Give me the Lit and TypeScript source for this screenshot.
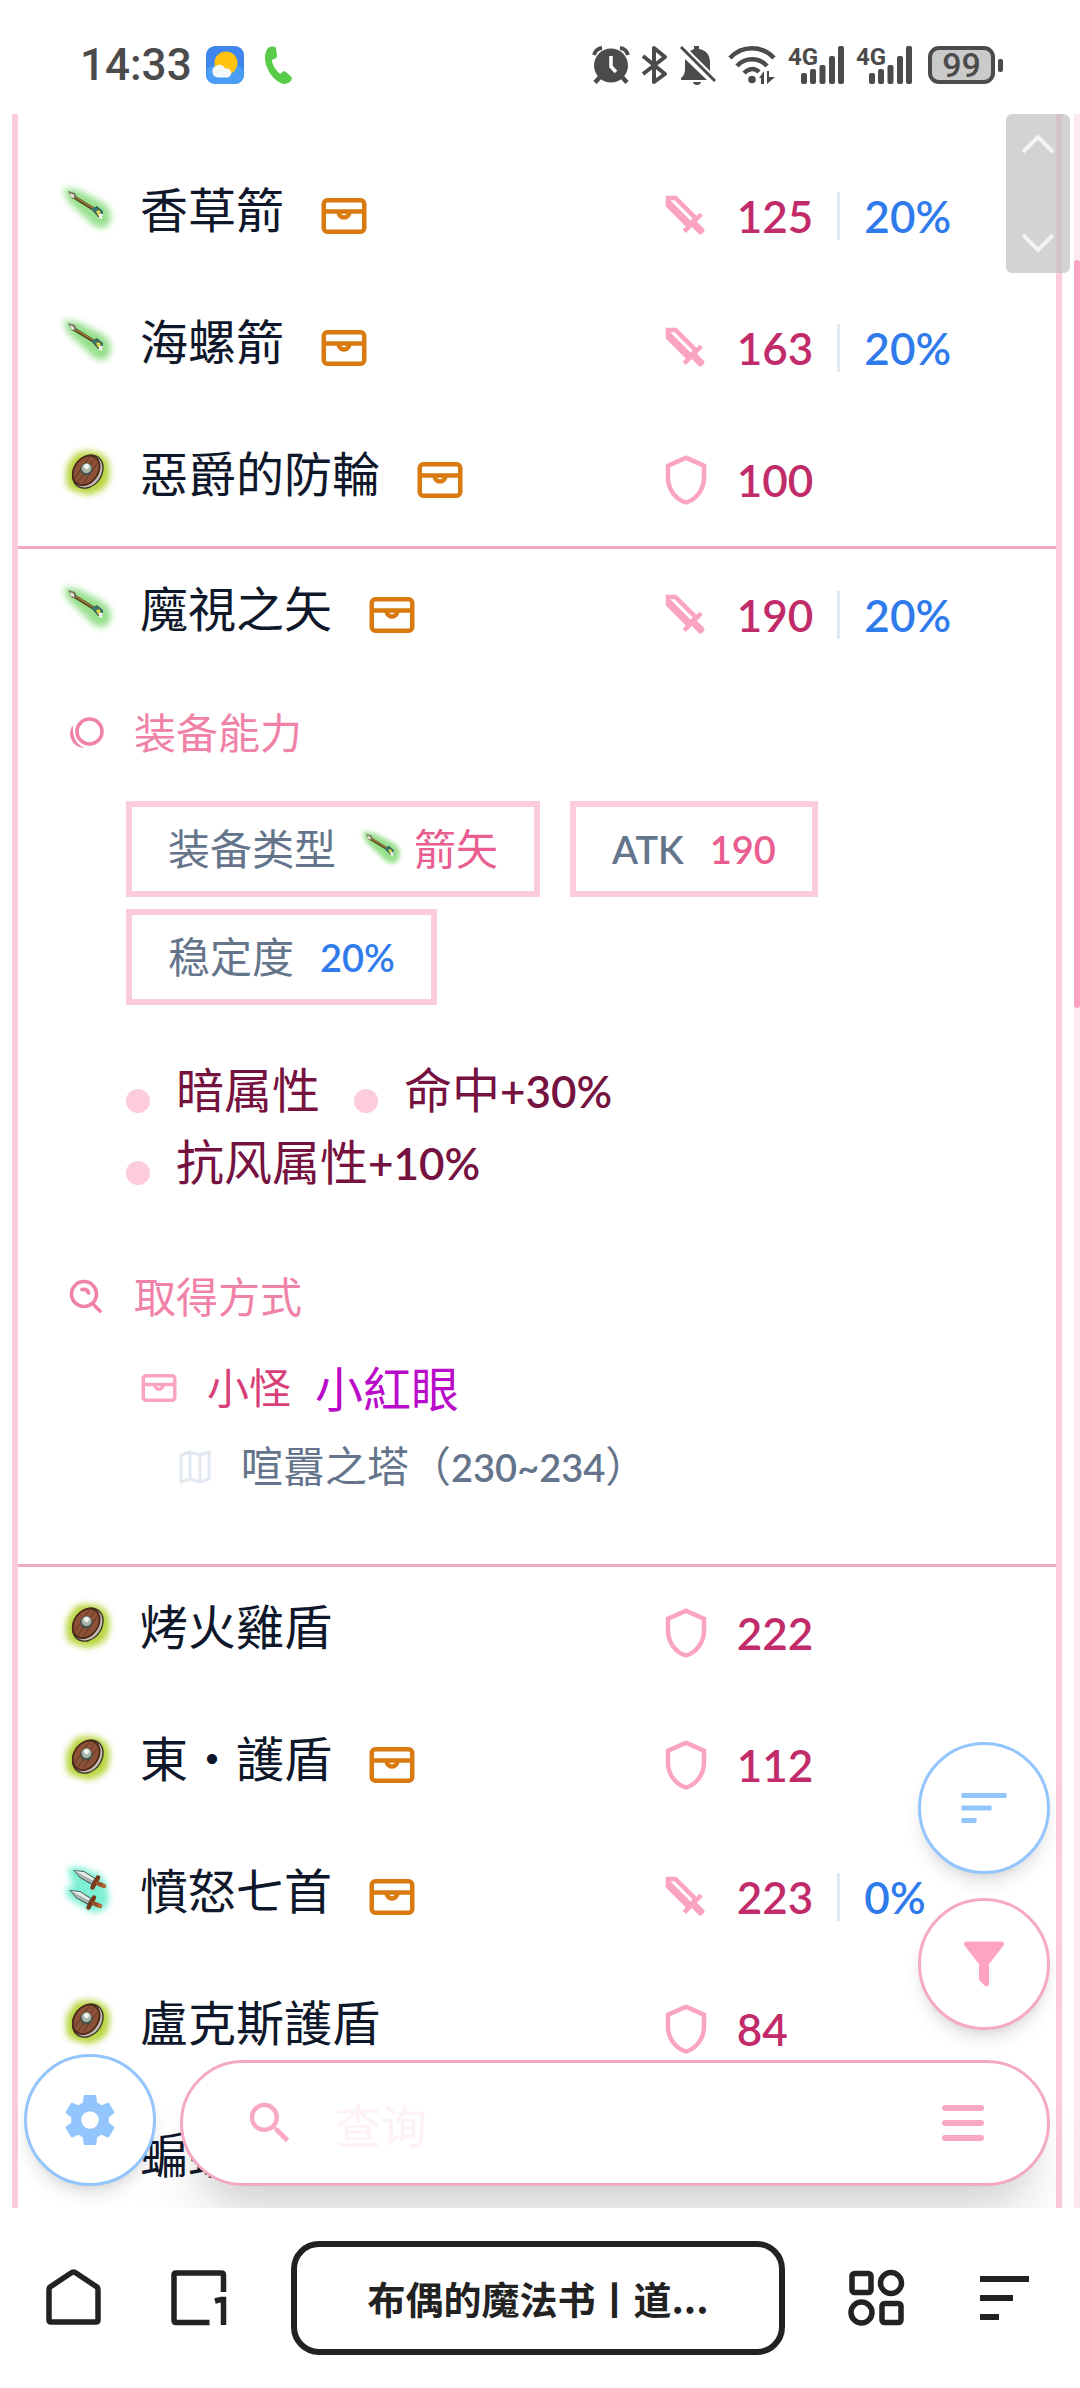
import { LitElement, html, css, svg, nothing } from "lit";
import { customElement, property } from "lit/decorators.js";

type Kind = "arrow" | "shield" | "dagger";

interface Item {
  kind: Kind;
  name: string;
  drop: boolean;
  value: number;
  stability?: number;
  detail?: boolean;
}

const ITEMS: Item[] = [
  { kind: "arrow", name: "香草箭", drop: true, value: 125, stability: 20 },
  { kind: "arrow", name: "海螺箭", drop: true, value: 163, stability: 20 },
  { kind: "shield", name: "惡爵的防輪", drop: true, value: 100 },
  { kind: "arrow", name: "魔視之矢", drop: true, value: 190, stability: 20, detail: true },
  { kind: "shield", name: "烤火雞盾", drop: false, value: 222 },
  { kind: "shield", name: "東・護盾", drop: true, value: 112 },
  { kind: "dagger", name: "憤怒七首", drop: true, value: 223, stability: 0 },
  { kind: "shield", name: "盧克斯護盾", drop: false, value: 84 },
  { kind: "shield", name: "蝙蝠", drop: false, value: 96 },
];

const PATHS = {
  sword:
    "M6.92,5H5L14,14L15,13.06M19.96,19.12L19.12,19.96C18.73,20.35 18.1,20.35 17.71,19.96L14.59,16.84L11.91,19.5L10.5,18.09L11.92,16.67L3,7.75V3H7.75L16.67,11.92L18.09,10.5L19.5,11.91L16.83,14.58L19.95,17.7C20.35,18.1 20.35,18.73 19.96,19.12Z",
  guard:
    "M21,11C21,16.55 17.16,21.74 12,23C6.84,21.74 3,16.55 3,11V5L12,1L21,5V11M12,21C15.75,20 19,15.54 19,11.22V6.3L12,3.18L5,6.3V11.22C5,15.54 8.25,20 12,21Z",
  sort: "M3,13H15V11H3M3,6V8H21V6M3,18H9V16H3V18Z",
  filter:
    "M14,12V19.88C14.04,20.18 13.94,20.5 13.71,20.71C13.32,21.1 12.69,21.1 12.3,20.71L10.29,18.7C10.06,18.47 9.96,18.16 10,17.87V12H9.97L4.21,4.62C3.87,4.19 3.95,3.56 4.38,3.22C4.57,3.08 4.78,3 5,3V3H19V3C19.22,3 19.43,3.08 19.62,3.22C20.05,3.56 20.13,4.19 19.79,4.62L14.03,12H14Z",
  cog: "M12,15.5A3.5,3.5 0 0,1 8.5,12A3.5,3.5 0 0,1 12,8.5A3.5,3.5 0 0,1 15.5,12A3.5,3.5 0 0,1 12,15.5M19.43,12.97C19.47,12.65 19.5,12.33 19.5,12C19.5,11.67 19.47,11.34 19.43,11L21.54,9.37C21.73,9.22 21.78,8.95 21.66,8.73L19.66,5.27C19.54,5.05 19.27,4.96 19.05,5.05L16.56,6.05C16.04,5.66 15.5,5.32 14.87,5.07L14.5,2.42C14.46,2.18 14.25,2 14,2H10C9.75,2 9.54,2.18 9.5,2.42L9.13,5.07C8.5,5.32 7.96,5.66 7.44,6.05L4.95,5.05C4.73,4.96 4.46,5.05 4.34,5.27L2.34,8.73C2.21,8.95 2.27,9.22 2.46,9.37L4.57,11C4.53,11.34 4.5,11.67 4.5,12C4.5,12.33 4.53,12.65 4.57,12.97L2.46,14.63C2.27,14.78 2.21,15.05 2.34,15.27L4.34,18.73C4.46,18.95 4.73,19.03 4.95,18.95L7.44,17.94C7.96,18.34 8.5,18.68 9.13,18.93L9.5,21.58C9.54,21.82 9.75,22 10,22H14C14.25,22 14.46,21.82 14.5,21.58L14.87,18.93C15.5,18.67 16.04,18.34 16.56,17.94L19.05,18.95C19.27,19.03 19.54,18.95 19.66,18.73L21.66,15.27C21.78,15.05 21.73,14.78 21.54,14.63L19.43,12.97Z",
  magnify:
    "M9.5,3A6.5,6.5 0 0,1 16,9.5C16,11.11 15.41,12.59 14.44,13.73L14.71,14H15.5L20.5,19L19,20.5L14,15.5V14.71L13.73,14.44C12.59,15.41 11.11,16 9.5,16A6.5,6.5 0 0,1 3,9.5A6.5,6.5 0 0,1 9.5,3M9.5,5C7,5 5,7 5,9.5C5,12 7,14 9.5,14C12,14 14,12 14,9.5C14,7 12,5 9.5,5Z",
};

const glyph = (name: keyof typeof PATHS, cls: string) => html`
  <svg class=${cls} viewBox="0 0 24 24" aria-hidden="true"><path fill="currentColor" d=${PATHS[name]} /></svg>
`;

const chest = (cls: string) => html`
  <svg class=${cls} viewBox="0 0 24 24" fill="none" stroke="currentColor" stroke-width="2" aria-hidden="true">
    <rect x="3" y="5" width="18" height="14" rx="1.6" />
    <path d="M3 10H21M9.6 10a2.4 2.7 0 0 0 4.8 0" />
  </svg>
`;

@customElement("item-icon")
export class ItemIcon extends LitElement {
  @property() kind: Kind = "arrow";

  static styles = css`
    :host {
      display: block;
      flex: none;
      width: 48px;
      height: 48px;
    }
    :host([small]) {
      width: 38px;
      height: 38px;
    }
    svg {
      display: block;
      width: 100%;
      height: 100%;
      overflow: visible;
    }
    .glow {
      filter: blur(3px);
    }
  `;

  private arrow() {
    return svg`
      <path class="glow" fill="#98e08e" d="M1 2 Q7 3 15 4 L35 14 Q48 20 48 30 Q47 41 40 42 Q32 43 25 34 L10 20 Q2 14 1 2Z" />
      <path stroke="#5a4a24" stroke-width="3.6" stroke-linecap="round" d="M11 11 L32 24" />
      <path stroke="#a4803a" stroke-width="1.4" stroke-linecap="round" d="M12 11 L33 24" />
      <path fill="#77735f" d="M5 5 L12 7 L14 12 L9 13Z" />
      <path fill="#e8e6da" d="M7 7 L11 9 L11 12 L8 11Z" />
      <path fill="#37776a" d="M28 23 L34 20 L40 25 L40 31 L35 31Z" />
      <path fill="#d8cf4e" d="M33 25 L37 24 L38 29 L35 30Z" />
      <path fill="#f6f4ee" d="M36 28 L40 28 L39 33 L36 32Z" />
      <path stroke="#4c4632" stroke-width="0.8" fill="none" d="M31 25 L36 31 M33 21 L39 26" />
    `;
  }

  private shield() {
    return svg`
      <path class="glow" fill="#b8d53e" d="M13 3 L24 1 L37 3 L45 10 L47 23 L44 35 L37 41 L25 45 L14 42 L5 38 L3 28 L4 16Z" />
      <g transform="rotate(35 24 21)">
        <ellipse cx="25" cy="21" rx="14.500" ry="18.500" fill="#3c3527" />
        <ellipse cx="25" cy="21" rx="13.200" ry="17" fill="#c6beb4" />
        <ellipse cx="23" cy="21" rx="12.800" ry="17" fill="#4e2a1b" />
        <ellipse cx="23" cy="21" rx="11" ry="15" fill="#8c5136" />
        <path stroke="#6b3b26" stroke-width="1" d="M18 9V33M23 7V36M28 9V33" />
        <circle cx="22.500" cy="20" r="6.200" fill="#47534a" />
        <circle cx="22" cy="19" r="4.900" fill="#a9b7aa" />
        <circle cx="21" cy="17.500" r="2.600" fill="#eff4ee" />
      </g>
    `;
  }

  private dagger() {
    const weapon = svg`
      <path fill="#4d5a57" d="M0 0 L11 1 L22 8 L19 15 L7 8Z" />
      <path fill="#e6ecea" d="M1.500 1 L11 2 L21 8.500 L20 11Z" />
      <path fill="#a9b5b2" d="M1.500 1 L20 11 L18.500 13.500 L7.500 7.200Z" />
      <path stroke="#7a3a1a" stroke-width="4.500" stroke-linecap="round" d="M25 7.500 L19.500 17.500" />
      <path stroke="#9a5128" stroke-width="4.500" stroke-linecap="round" d="M25 13.500 L31 16" />
      <circle cx="31" cy="16" r="2" fill="#b9683d" />
    `;
    return svg`
      <path class="glow" fill="#7df0d4" d="M6 0 L20 1 L38 8 L44 18 L46 34 L41 43 L30 46 L20 40 L4 30 L3 21 L11 18 L6 8Z" />
      <g transform="translate(10 3)">${weapon}</g>
      <g transform="translate(6 23)">${weapon}</g>
    `;
  }

  render() {
    const body = this.kind === "arrow" ? this.arrow() : this.kind === "shield" ? this.shield() : this.dagger();
    return html`<svg viewBox="0 0 48 48" fill="none" aria-hidden="true">${body}</svg>`;
  }
}

@customElement("status-bar")
export class StatusBar extends LitElement {
  static styles = css`
    :host {
      display: flex;
      flex: none;
      align-items: center;
      justify-content: space-between;
      height: 114px;
      padding: 18px 77px 2px 80px;
      box-sizing: border-box;
      background: #fff;
      color: #4b4b4b;
      font-family: Roboto, sans-serif;
    }
    .group {
      display: flex;
      align-items: center;
    }
    .left {
      gap: 14px;
    }
    .right {
      gap: 12px;
    }
    .time {
      font-size: 44px;
      line-height: 48px;
      font-weight: 500;
    }
    svg {
      display: block;
      flex: none;
      overflow: visible;
    }
    .call {
      margin-left: 6px;
    }
    .network {
      font: 700 24px Roboto, sans-serif;
    }
    .battery {
      display: flex;
      align-items: center;
      gap: 3px;
      margin-left: 4px;
    }
    .level {
      width: 67px;
      height: 38px;
      box-sizing: border-box;
      border: 4px solid #4b4b4b;
      border-radius: 11px;
      background: #cacaca;
      font-size: 34px;
      line-height: 30px;
      font-weight: 500;
      text-align: center;
    }
    .nub {
      width: 5px;
      height: 13px;
      border-radius: 2px;
      background: #4b4b4b;
    }
  `;

  private cell() {
    return html`
      <svg width="56" height="38" viewBox="0 0 56 38" fill="currentColor" aria-hidden="true">
        <text class="network" x="0" y="19">4G</text>
        <rect x="13" y="27" width="6" height="11" rx="2" />
        <rect x="22" y="23" width="6" height="15" rx="2" />
        <rect x="31.500" y="19" width="6" height="19" rx="2" />
        <rect x="41" y="10" width="6" height="28" rx="2" />
        <rect x="50" y="0" width="6" height="38" rx="2" />
      </svg>
    `;
  }

  render() {
    return html`
      <div class="group left">
        <span class="time">14:33</span>
        <svg width="38" height="38" viewBox="0 0 38 38" aria-hidden="true">
          <rect width="38" height="38" rx="9" fill="#3f85ee" />
          <rect y="19" width="38" height="19" rx="9" fill="#4a9df5" />
          <circle cx="20" cy="17" r="11.500" fill="#ffc20e" />
          <path fill="#f3f8fb" d="M12 31.500a6 6 0 0 1-2-11.500 6 6 0 0 1 9 2.500 4.600 4.600 0 0 1 3 9Z" />
        </svg>
        <svg class="call" width="28" height="38" viewBox="0 0 28 38" aria-hidden="true">
          <path fill="#58cb48" d="M4 2C7 0 11 0 12 2L13 10C13 12 10 13 8 14C8 19 12 24 16 28L20 25C21 25 27 30 28 32C28 35 24 38 20 38C8 36-5 14 4 2Z" />
        </svg>
      </div>
      <div class="group right">
        <svg width="38" height="38" viewBox="0 0 38 38" aria-hidden="true">
          <circle cx="19" cy="19.500" r="17" fill="currentColor" />
          <path d="M2 9A9 9 0 0 1 10 2M36 9A9 9 0 0 0 28 2" stroke="currentColor" stroke-width="4" fill="none" />
          <path d="M8 31 3 36.500M30 31l5 5.500" stroke="currentColor" stroke-width="4.500" />
          <path d="M19 10V20.500L24 26" stroke="#fff" stroke-width="3.500" fill="none" />
        </svg>
        <svg width="26" height="38" viewBox="0 0 26 38" fill="none" stroke="currentColor" stroke-width="4" stroke-linejoin="round" aria-hidden="true">
          <path d="M1 10 23 28 12 36V2L23 11 1 28" />
        </svg>
        <svg width="36" height="40" viewBox="0 0 36 40" fill="currentColor" aria-hidden="true">
          <path d="M1 35V33C4 31 5 27 5 24V16L5 14 27 35ZM10 6 14 4V1H19V4C26 5 30 10 30 17V26ZM13 37H21C21 41 13 41 13 37Z" />
          <path d="M1 2 35 36" stroke="currentColor" stroke-width="3" />
        </svg>
        <svg width="48" height="38" viewBox="0 0 48 38" fill="none" stroke="currentColor" stroke-width="4.500" aria-hidden="true">
          <path d="M2 12C14-1 34-1 46 12M9 20C17 11 31 11 39 20M16 27C21 22 27 22 31 26" />
          <circle cx="24" cy="33.500" r="3.800" fill="currentColor" stroke="none" />
          <path fill="currentColor" stroke="none" d="M31 32 36 25V38H33V32ZM39 25H41V31H47L39 38Z" />
        </svg>
        ${this.cell()} ${this.cell()}
        <div class="battery">
          <div class="level">99</div>
          <div class="nub"></div>
        </div>
      </div>
    `;
  }
}

@customElement("browser-bar")
export class BrowserBar extends LitElement {
  static styles = css`
    :host {
      display: flex;
      flex: none;
      align-items: center;
      height: 180px;
      padding: 0 47px 0 44px;
      box-sizing: border-box;
      background: #fff;
      color: #222;
    }
    button {
      flex: none;
      padding: 0;
      border: 0;
      background: none;
      color: inherit;
    }
    svg {
      display: block;
    }
    .icon {
      width: 60px;
      height: 60px;
    }
    .tabs {
      margin-left: 65px;
    }
    .address {
      flex: 1;
      min-width: 0;
      height: 114px;
      margin: 0 62px;
      border: 6px solid #222;
      border-radius: 28px;
      font: 700 38px/48px "Noto Sans CJK SC", sans-serif;
      text-align: center;
      white-space: nowrap;
      overflow: hidden;
    }
    .more {
      margin-left: 72px;
      width: 54px;
    }
  `;

  render() {
    return html`
      <button class="icon" aria-label="主页">
        <svg width="60" height="60" viewBox="0 0 60 60" fill="none" stroke="currentColor" stroke-width="5.500" stroke-linejoin="round">
          <path d="M5 22Q5 20 6 19L27 5Q29.500 3 32 5L53 19Q54 20 54 22V52Q54 54 52 54H7Q5 54 5 52Z" />
        </svg>
      </button>
      <button class="icon tabs" aria-label="标签页 1">
        <svg width="60" height="60" viewBox="0 0 60 60" fill="none" stroke="currentColor" stroke-width="5.500">
          <path d="M54.500 24V7Q54.500 5 52.500 5H7Q5 5 5 7V52Q5 54.500 7 54.500H40.500M46 33L52 31.500H54.500V57" />
        </svg>
      </button>
      <button class="address">布偶的魔法书丨道...</button>
      <button class="icon" aria-label="应用">
        <svg width="60" height="60" viewBox="0 0 60 60" fill="none" stroke="currentColor" stroke-width="5.500">
          <rect x="5" y="5.500" width="19" height="19" rx="2.500" />
          <circle cx="44" cy="15" r="10.500" />
          <circle cx="14.500" cy="44.500" r="10.500" />
          <rect x="35" y="35.500" width="19" height="19" rx="2.500" />
        </svg>
      </button>
      <button class="more" aria-label="菜单">
        <svg width="54" height="44" viewBox="0 0 54 44" fill="currentColor">
          <path d="M1 0H50V6H1ZM1 19H34V25H1ZM1 38H20V44H1Z" />
        </svg>
      </button>
    `;
  }
}

@customElement("app-root")
export class AppRoot extends LitElement {
  static styles = css`
    :host {
      display: flex;
      flex-direction: column;
      height: 100vh;
      background: #fff;
      font-family: "Noto Sans CJK TC", "Noto Sans CJK SC", sans-serif;
      color: #0f172a;
      --rose: #f9a8c4;
      --rose-pale: #fccbdc;
      --slate: #64748b;
      --blue: #2f7bec;
    }
    .stage {
      position: relative;
      flex: 1;
      min-height: 0;
      overflow: hidden;
      background: #fff;
    }
    .list {
      margin: 0 18px 0 12px;
      padding: 36px 0 0;
      border: solid var(--rose-pale);
      border-width: 0 6px;
      list-style: none;
    }
    .row {
      display: grid;
      grid-template-columns: minmax(0, 3fr) minmax(0, 2fr);
      height: 132px;
      padding-left: 45px;
    }
    .open {
      border: solid #f0a9c5;
      border-width: 3px 0;
    }
    .title,
    .stat {
      display: flex;
      align-items: center;
      white-space: nowrap;
    }
    .title item-icon {
      margin: 0 29px 12px 0;
    }
    .name {
      margin-bottom: 18px;
      font-size: 48px;
      line-height: 60px;
    }
    .drop {
      flex: none;
      width: 54px;
      height: 54px;
      margin-left: 33px;
      color: #d97a10;
    }
    .stat,
    .latin {
      font-family: Lato, sans-serif;
      font-weight: 600;
    }
    .stat {
      font-size: 44px;
      line-height: 48px;
      color: #c22b69;
    }
    .stat-icon {
      flex: none;
      width: 54px;
      height: 54px;
      margin-right: 24px;
      color: #fba4c2;
    }
    .stability {
      margin-left: 24px;
      padding-left: 24px;
      border-left: 3px solid #e2e8f0;
      color: var(--blue);
    }
    .detail {
      padding: 20px 0 69px;
      font-size: 42px;
      line-height: 60px;
    }
    .heading {
      display: flex;
      align-items: center;
      gap: 29px;
      margin: 0;
      padding-left: 51px;
      font-size: inherit;
      font-weight: 400;
      color: #f082a8;
    }
    .heading svg {
      width: 36px;
      height: 36px;
    }
    .chips {
      display: flex;
      flex-wrap: wrap;
      gap: 12px 30px;
      margin-top: 40px;
      padding: 0 200px 0 108px;
      color: var(--slate);
    }
    .chip {
      display: flex;
      align-items: center;
      height: 96px;
      padding: 0 36px;
      box-sizing: border-box;
      border: 6px solid var(--rose-pale);
      line-height: 60px;
    }
    .chip .cjk {
      margin-bottom: 4px;
    }
    .chip item-icon {
      margin: 0 14px 0 26px;
    }
    .latin {
      font-size: 38px;
    }
    .chip .figure {
      margin-left: 26px;
    }
    .pink {
      color: #e95d90;
    }
    .blue {
      color: var(--blue);
    }
    .effects {
      display: flex;
      flex-wrap: wrap;
      gap: 0 34px;
      margin: 46px 0 0;
      padding: 0 260px 0 108px;
      list-style: none;
      font-size: 48px;
      line-height: 72px;
      color: #75123f;
    }
    .effect {
      display: flex;
      align-items: center;
      gap: 26px;
      height: 72px;
    }
    .effect .latin {
      font-size: 44px;
      line-height: 48px;
    }
    .dot {
      width: 24px;
      height: 24px;
      margin-top: 28px;
      border-radius: 50%;
      background: var(--rose-pale);
    }
    .obtain {
      margin-top: 70px;
    }
    .source,
    .place {
      display: flex;
      align-items: center;
      height: 60px;
    }
    .source {
      margin-top: 31px;
      padding-left: 120px;
      color: #d83f78;
    }
    .source svg {
      width: 42px;
      height: 42px;
      margin: 4px 27px 0 0;
      color: #fba4c2;
    }
    .monster {
      margin-left: 24px;
      font-size: 48px;
      color: #b90bc9;
      text-decoration: none;
    }
    .place {
      margin-top: 19px;
      padding-left: 159px;
      color: var(--slate);
    }
    .place svg {
      width: 36px;
      height: 36px;
      margin: 4px 28px 0 0;
      color: #e2e8f0;
    }
    .track {
      position: absolute;
      top: 0;
      right: 0;
      bottom: 0;
      width: 6px;
      background: #fee8f0;
    }
    .thumb {
      height: 748px;
      margin-top: 146px;
      border-radius: 3px;
      background: #fda1c0;
    }
    .jump {
      position: absolute;
      top: 0;
      right: 10px;
      display: flex;
      flex-direction: column;
      justify-content: space-between;
      height: 159px;
      width: 64px;
      padding: 18px 0;
      box-sizing: border-box;
      border-radius: 6px;
      background: rgba(192, 192, 192, 0.7);
    }
    button {
      display: flex;
      align-items: center;
      justify-content: center;
      padding: 0;
      border: 0;
      background: none;
      color: inherit;
    }
    .fabs {
      position: absolute;
      right: 30px;
      bottom: 178px;
      display: flex;
      flex-direction: column;
      gap: 24px;
    }
    .fab {
      flex: none;
      width: 132px;
      height: 132px;
      border: 3px solid #93c5fd;
      border-radius: 50%;
      background: #fff;
      color: #93c5fd;
      box-shadow: 0 12px 18px -3px rgba(0, 0, 0, 0.1), 0 6px 12px -6px rgba(0, 0, 0, 0.1);
    }
    .fab.rose {
      border-color: #f5a9c3;
      color: #fea3c1;
    }
    .fab-icon {
      width: 60px;
      height: 60px;
    }
    .dock {
      position: absolute;
      left: 24px;
      right: 30px;
      bottom: 22px;
      display: flex;
      align-items: flex-end;
      gap: 24px;
    }
    .search {
      display: flex;
      flex: 1;
      align-items: center;
      min-width: 0;
      height: 126px;
      padding: 0 63px 0 60px;
      box-sizing: border-box;
      border: 3px solid #f3a9c3;
      border-radius: 63px;
      background: #fff;
      color: var(--rose);
      box-shadow: 0 60px 75px -15px rgba(0, 0, 0, 0.1), 0 24px 30px -12px rgba(0, 0, 0, 0.1);
    }
    .search-icon {
      flex: none;
      width: 54px;
      height: 54px;
    }
    input {
      flex: 1;
      min-width: 0;
      margin: 0 38px;
      padding: 0;
      border: 0;
      outline: 0;
      background: none;
      font: 400 46px/60px "Noto Sans CJK SC", sans-serif;
      color: #be185d;
    }
    input::placeholder {
      color: #fef2f6;
      opacity: 1;
    }
  `;

  private row(item: Item) {
    return html`
      <div class="row">
        <div class="title">
          <item-icon .kind=${item.kind}></item-icon>
          <span class="name">${item.name}</span>
          ${item.drop ? chest("drop") : nothing}
        </div>
        <div class="stat">
          ${glyph(item.kind === "shield" ? "guard" : "sword", "stat-icon")}
          <span>${item.value}</span>
          ${item.stability === undefined ? nothing : html`<span class="stability">${item.stability}%</span>`}
        </div>
      </div>
    `;
  }

  private detail() {
    return html`
      <div class="detail">
        <h3 class="heading">
          <svg viewBox="1 -3 36 36" fill="none" stroke="currentColor" aria-hidden="true">
            <circle cx="21.500" cy="15.500" r="12.500" stroke-width="3.600" />
            <path fill="currentColor" stroke="none" d="M5 9C-2 18 4 32 17 32C9 29 4 22 5 9Z" />
          </svg>
          装备能力
        </h3>
        <div class="chips">
          <div class="chip">
            <span class="cjk">装备类型</span>
            <item-icon small .kind=${"arrow" as Kind}></item-icon>
            <span class="cjk pink">箭矢</span>
          </div>
          <div class="chip latin"><span>ATK</span><span class="figure pink">190</span></div>
          <div class="chip">
            <span class="cjk">稳定度</span><span class="latin figure blue">20%</span>
          </div>
        </div>
        <ul class="effects">
          <li class="effect"><span class="dot"></span><span>暗属性</span></li>
          <li class="effect"><span class="dot"></span><span>命中<span class="latin">+30%</span></span></li>
          <li class="effect"><span class="dot"></span><span>抗风属性<span class="latin">+10%</span></span></li>
        </ul>
        <h3 class="heading obtain">
          <svg viewBox="0 -2 36 36" fill="none" stroke="currentColor" stroke-width="3.600" aria-hidden="true">
            <circle cx="15" cy="15" r="12.500" />
            <path stroke-linecap="round" d="M24 25L31 32M13 10.500Q18.500 9.500 19.500 14" />
          </svg>
          取得方式
        </h3>
        <div class="source">${chest("")}<span>小怪</span><a class="monster" href="#monster">小紅眼</a></div>
        <div class="place">
          <svg viewBox="0 0 36 36" fill="none" stroke="currentColor" stroke-width="3" stroke-linejoin="round" aria-hidden="true">
            <path d="M4 6L13 3L23 6L32 3V30L23 33L13 30L4 33ZM13 3V30M23 6V33" />
          </svg>
          <span>喧囂之塔（<span class="latin">230~234</span>）</span>
        </div>
      </div>
    `;
  }

  render() {
    return html`
      <status-bar></status-bar>
      <main class="stage">
        <ul class="list">
          ${ITEMS.map((item) =>
            item.detail ? html`<li class="open">${this.row(item)}${this.detail()}</li>` : html`<li>${this.row(item)}</li>`,
          )}
        </ul>
        <div class="track"><div class="thumb"></div></div>
        <div class="jump">
          <button aria-label="回到顶部">
            <svg width="36" height="24" viewBox="0 0 36 24" fill="none" stroke="#f3f3f3" stroke-width="4"><path d="M3 20L18 5L33 20" /></svg>
          </button>
          <button aria-label="前往底部">
            <svg width="36" height="24" viewBox="0 0 36 24" fill="none" stroke="#f3f3f3" stroke-width="4"><path d="M3 4L18 19L33 4" /></svg>
          </button>
        </div>
        <div class="fabs">
          <button class="fab" aria-label="排序">${glyph("sort", "fab-icon")}</button>
          <button class="fab rose" aria-label="筛选">${glyph("filter", "fab-icon")}</button>
        </div>
        <div class="dock">
          <button class="fab" aria-label="设置">${glyph("cog", "fab-icon")}</button>
          <div class="search">
            ${glyph("magnify", "search-icon")}
            <input type="text" placeholder="查询" aria-label="查询" />
            <button aria-label="选单">
              <svg width="42" height="36" viewBox="0 0 42 36" fill="currentColor">
                <rect width="42" height="6" rx="3" />
                <rect y="15" width="42" height="6" rx="3" />
                <rect y="30" width="42" height="6" rx="3" />
              </svg>
            </button>
          </div>
        </div>
      </main>
      <browser-bar></browser-bar>
    `;
  }
}
